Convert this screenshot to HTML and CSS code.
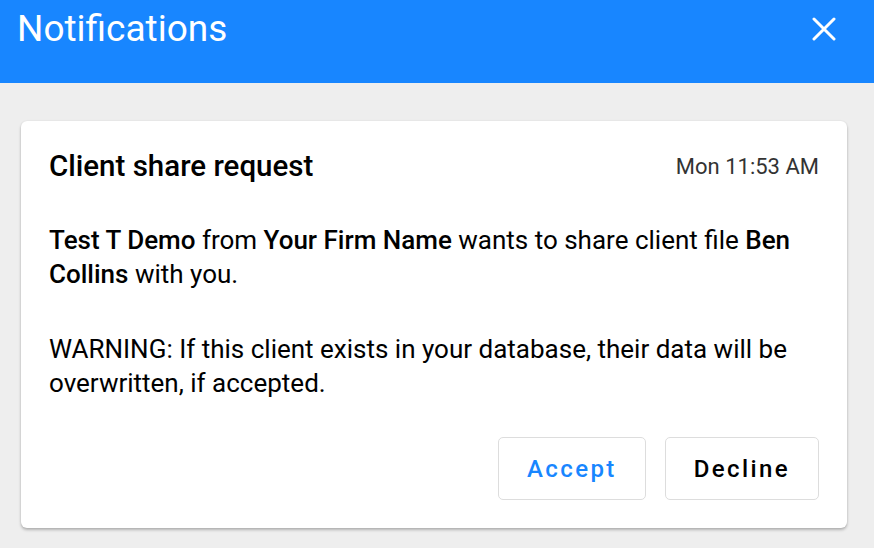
FILE: index.html
```html
<!DOCTYPE html>
<html lang="en">
<head>
    <meta charset="UTF-8">
    <meta name="viewport" content="width=device-width, initial-scale=1.0">
    <title>Notifications</title>
    <link rel="stylesheet" href="styles.css">
</head>
<body>
    <header class="topbar">
        <h1 class="topbar-title">Notifications</h1>
        <button class="close-btn" aria-label="Close">
            <svg width="24" height="24" viewBox="0 0 24 24">
                <path d="M2 2 L22 22 M22 2 L2 22" stroke="#fff" stroke-width="3" stroke-linecap="round"/>
            </svg>
        </button>
    </header>

    <main class="content">
        <div class="card">
            <div class="card-head">
                <h2 class="card-title">Client share request</h2>
                <span class="card-time">Mon 11:53 AM</span>
            </div>
            <p class="card-text">
                <b>Test T Demo</b> from <b>Your Firm Name</b> wants to share client file <b>Ben</b> <b>Collins</b> with you.
            </p>
            <p class="card-text">
                WARNING: If this client exists in your database, their data will be overwritten, if accepted.
            </p>
            <div class="card-actions">
                <button class="action accept">Accept</button>
                <button class="action decline">Decline</button>
            </div>
        </div>
    </main>
</body>
</html>
```

FILE: styles.css
```css
body {
    margin: 0;
    background-color: #eeeeee;
    font-family: Roboto, 'Liberation Sans', sans-serif;
    color: #000;
}

/* blue header bar */
.topbar {
    height: 83px;
    background-color: #1886ff;
    display: flex;
    align-items: flex-start;
    justify-content: space-between;
    padding: 0 38px 0 17px;
    box-sizing: border-box;
}

.topbar-title {
    margin: 0;
    font-size: 37px;
    font-weight: 400;
    color: #fff;
    line-height: 58px;
}

.close-btn {
    background: none;
    border: none;
    padding: 0;
    margin-top: 17px;
    width: 24px;
    height: 24px;
    cursor: pointer;
}

.close-btn svg {
    display: block;
}

.content {
    padding: 38px 27px 20px 21px;
}

.card {
    background-color: #fff;
    border-radius: 6px;
    box-shadow: 0 2px 3px rgba(0, 0, 0, 0.25), 0 0 2px rgba(0, 0, 0, 0.08);
    padding: 28px;
}

.card-head {
    display: flex;
    justify-content: space-between;
    align-items: center;
    margin-bottom: 40px;
}

.card-title {
    margin: 0;
    font-size: 29.5px;
    font-weight: 500;
    line-height: 34px;
}

.card-time {
    font-size: 22px;
    color: #333;
}

.card-text {
    margin: 0 0 41px;
    font-size: 26px;
    line-height: 34px;
}

.card-text b {
    font-weight: 500;
}

.card-actions {
    display: flex;
    justify-content: flex-end;
    gap: 19px;
    margin-top: -4px;
}

.action {
    font-family: Roboto, 'Liberation Sans', sans-serif;
    font-size: 24px;
    font-weight: 500;
    letter-spacing: 0.1em;
    height: 63px;
    padding: 0 28px;
    background-color: #fff;
    border: 1px solid #dddddd;
    border-radius: 5px;
    cursor: pointer;
}

.accept {
    color: #1886ff;
}

.decline {
    color: #000;
}
```
